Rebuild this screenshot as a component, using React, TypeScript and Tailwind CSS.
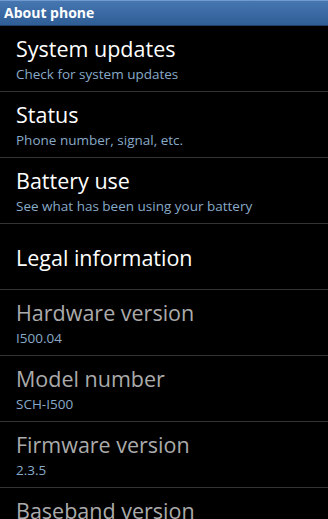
const items = [
  { title: "System updates", summary: "Check for system updates", enabled: true },
  { title: "Status", summary: "Phone number, signal, etc.", enabled: true },
  { title: "Battery use", summary: "See what has been using your battery", enabled: true },
  { title: "Legal information", summary: "", enabled: true },
  { title: "Hardware version", summary: "I500.04", enabled: false },
  { title: "Model number", summary: "SCH-I500", enabled: false },
  { title: "Firmware version", summary: "2.3.5", enabled: false },
  { title: "Baseband version", summary: " ", enabled: false },
];

export default function App() {
  return (
    <div className="w-[328px] h-[519px] overflow-hidden bg-black font-['Open_Sans',sans-serif]">
      <div className="h-[26px] flex items-center pl-1 border-t border-[#6f9bd0] bg-gradient-to-b from-[#4677b1] to-[#2f5d96] border-b border-b-[#1d3d66]">
        <span className="text-white text-[14px] font-bold leading-none">About phone</span>
      </div>
      <div className="flex flex-col">
        {items.map((item) => (
          <div
            key={item.title}
            className="h-[66px] shrink-0 flex flex-col justify-center px-4 pt-[2px] border-b border-[#343434]"
          >
            <div
              className={
                item.enabled
                  ? "text-[21.5px] leading-[27px] text-white"
                  : "text-[21.5px] leading-[27px] text-[#ababab]"
              }
            >
              {item.title}
            </div>
            {item.summary && (
              <div className="mt-[2px] text-[13.5px] leading-[20px] text-[#88aac8] whitespace-pre">{item.summary}</div>
            )}
          </div>
        ))}
      </div>
    </div>
  );
}
